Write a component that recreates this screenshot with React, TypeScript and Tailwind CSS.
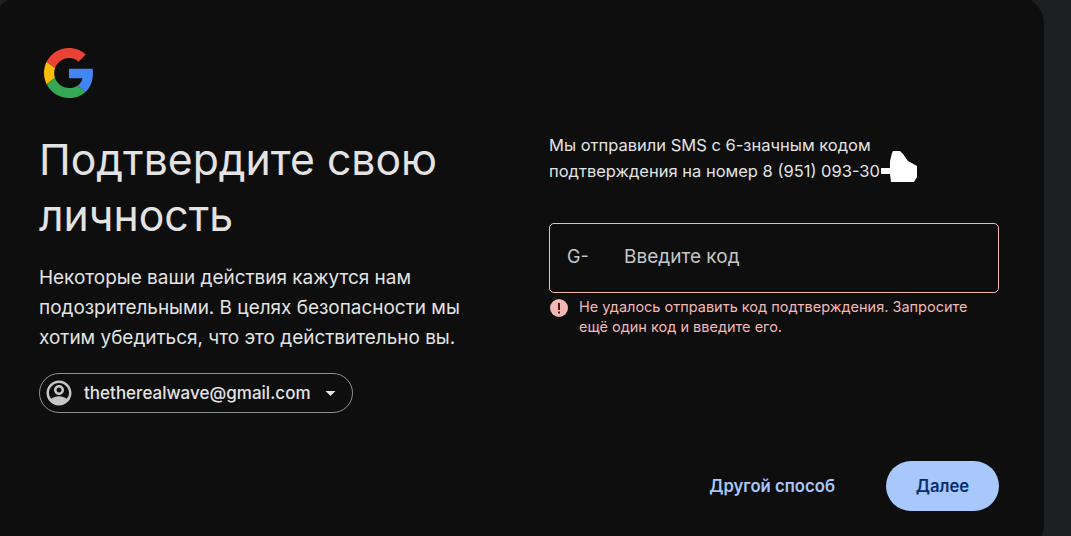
function GoogleLogo() {
  return (
    <svg viewBox="0 0 48 48" className="ml-[6px] h-[50px] w-[50px]">
      <path fill="#EA4335" d="M24 9.5c3.54 0 6.71 1.22 9.21 3.6l6.85-6.85C35.9 2.38 30.47 0 24 0 14.62 0 6.51 5.38 2.56 13.22l7.98 6.19C12.43 13.72 17.74 9.5 24 9.5z" />
      <path fill="#4285F4" d="M46.98 24.55c0-1.57-.15-3.09-.38-4.55H24v9.02h12.94c-.58 2.96-2.26 5.48-4.78 7.18l7.73 6c4.51-4.18 7.09-10.36 7.09-17.65z" />
      <path fill="#FBBC05" d="M10.53 28.59c-.48-1.45-.76-2.99-.76-4.59s.27-3.14.76-4.59l-7.98-6.19C.92 16.46 0 20.12 0 24c0 3.88.92 7.54 2.56 10.78l7.97-6.19z" />
      <path fill="#34A853" d="M24 48c6.48 0 11.93-2.13 15.89-5.81l-7.73-6c-2.15 1.45-4.92 2.3-8.16 2.3-6.26 0-11.57-4.22-13.47-9.91l-7.98 6.19C6.51 42.62 14.62 48 24 48z" />
    </svg>
  );
}

function AccountIcon() {
  return (
    <svg viewBox="0 0 24 24" className="h-[30px] w-[30px]">
      <path
        fill="#c4c7c5"
        fillRule="evenodd"
        d="M12 2C6.48 2 2 6.48 2 12s4.48 10 10 10 10-4.48 10-10S17.52 2 12 2zM18.14 16.6C16.45 15.3 14.32 14.5 12 14.5s-4.45.8-6.14 2.1C4.7 15.4 4 13.95 4 12c0-4.42 3.58-8 8-8s8 3.58 8 8c0 1.95-.7 3.4-1.86 4.6zM12 5.5c-2.2 0-4 1.8-4 4s1.8 4 4 4 4-1.8 4-4-1.8-4-4-4zM12 7.5c1.1 0 2 .9 2 2s-.9 2-2 2-2-.9-2-2 .9-2 2-2z"
      />
    </svg>
  );
}

function Scribble() {
  return (
    <svg viewBox="0 0 38 32" className="absolute left-[332px] top-[19px] h-[32px] w-[38px]">
      <path fill="#ffffff" d="M0 17h9l0-7 2-8 1-2h7l3 3 5 7 9 5v11l-3 5H10l-1-8H0z" />
    </svg>
  );
}

export default function App() {
  return (
    <div className="h-[536px] w-[1071px] overflow-hidden bg-[#1e1f20] font-['Inter',sans-serif]">
      <div className="-ml-[6px] -mt-[4px] flex h-[556px] w-[1050px] rounded-[28px] bg-[#0e0e0e] pl-[45px] pr-[45px] pt-[52px]">
        <div className="flex w-[510px] flex-col items-start">
          <div className="-ml-[1px]">
            <GoogleLogo />
          </div>
          <h1 className="mt-[34px] w-[440px] text-[42.7px] leading-[56px] text-[#e3e3e3]">
            Подтвердите свою личность
          </h1>
          <p className="mt-[19px] w-[440px] text-[18.95px] leading-[30px] text-[#e3e3e3]">
            Некоторые ваши действия кажутся нам подозрительными. В целях безопасности мы хотим убедиться, что это действительно вы.
          </p>
          <div className="mt-[20px] flex h-[40px] w-[314px] items-center rounded-full border border-[#8e918f] pl-[4px]">
            <AccountIcon />
            <span className="ml-[10px] text-[17.05px] font-medium text-[#e3e3e3]">thetherealwave@gmail.com</span>
            <svg viewBox="0 0 10 5" className="ml-[14px] h-[5px] w-[11px]">
              <path fill="#e3e3e3" d="M0 0h10L5 5z" />
            </svg>
          </div>
        </div>
        <div className="flex w-[450px] flex-col">
          <div className="relative mt-[84px] text-[16.5px] leading-[26px] text-[#e3e3e3]">
            <p>Мы отправили SMS с 6-значным кодом</p>
            <p>подтверждения на номер 8 (951) 093-30</p>
            <Scribble />
          </div>
          <div className="mt-[39px] flex h-[70px] items-center rounded-[5px] border border-[#f2b8b5] pl-[17px]">
            <span className="mb-[3px] w-[57px] text-[18px] text-[#c4c7c5]">G-</span>
            <span className="mb-[2px] text-[19px] text-[#c4c7c5]">Введите код</span>
          </div>
          <div className="mt-[4px] flex items-start">
            <svg viewBox="0 0 20 20" className="mt-[1px] h-[20px] w-[20px] shrink-0">
              <circle cx="10" cy="10" r="9" fill="#f2b8b5" />
              <rect x="9" y="5" width="2" height="7" fill="#601410" />
              <rect x="9" y="13.5" width="2" height="2" fill="#601410" />
            </svg>
            <p className="ml-[10px] w-[400px] text-[14.5px] leading-[20px] text-[#f2b8b5]">
              Не удалось отправить код подтверждения. Запросите ещё один код и введите его.
            </p>
          </div>
          <div className="mt-[124px] flex items-center justify-end">
            <span className="pt-[1px] text-[16.7px] font-semibold text-[#a8c7fa]">Другой способ</span>
            <button type="button" className="ml-[51px] h-[50px] w-[113px] rounded-full bg-[#a8c7fa] pt-[1px] text-[16.7px] font-semibold text-[#062e6f]">
              Далее
            </button>
          </div>
        </div>
      </div>
    </div>
  );
}
